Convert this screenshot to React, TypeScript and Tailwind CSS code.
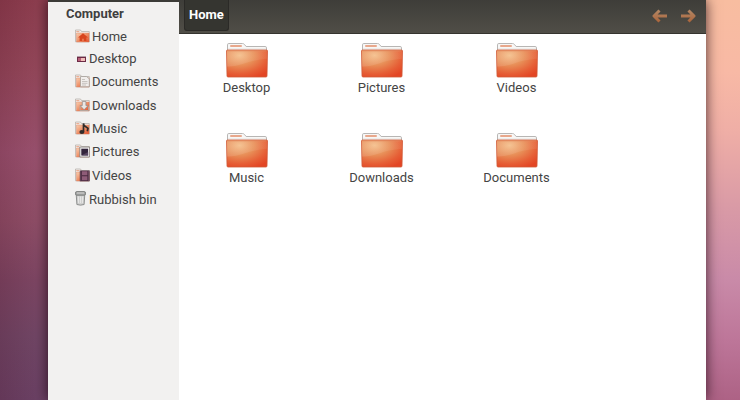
import type { ReactNode } from 'react';

interface Place {
	name: string;
	row: string;
	icon: ReactNode;
}

// Small folder with an emblem drawn over its front
function PlaceFolder({ children }: { children?: ReactNode }) {
	return (
		<svg viewBox="0 0 15 14" className="mb-[2px] h-[14px] w-[15px] shrink-0" aria-hidden="true">
			<path d="M.5 12.8V1h5l1 1.5h7.8v10.3z" fill="#f3efec" stroke="#b9b2ac" strokeWidth=".8" />
			<path d="M1.3 2.6h3" stroke="#e9a78b" />
			<path d="M1.5 4h12.6v9H1.5z" fill="url(#place-front)" stroke="#dc8160" strokeWidth=".4" />
			{children}
		</svg>
	);
}

const places: Place[] = [
	{
		name: 'Home',
		row: 'h-[23px] gap-[2px]',
		icon: (
			<PlaceFolder>
				<path d="M8 4.2 3 8.5h1.6V12h2.6V9.8h1.6V12h2.6V8.5H13z" fill="#d8451e" />
			</PlaceFolder>
		)
	},
	{
		name: 'Desktop',
		row: 'h-[22px] gap-[3px] pl-[2px]',
		icon: (
			<svg viewBox="0 0 9 6" className="h-[6px] w-[9px] shrink-0" aria-hidden="true">
				<path d="M0 0h9v6H0z" fill="#6c2b45" />
				<path d="M1 2h7v3H1z" fill="#f0bdb8" />
				<path d="M1 2h3v3H1z" fill="#b8607a" />
				<path d="M0 0h9v1H0z" fill="#b3a0a8" />
			</svg>
		)
	},
	{
		name: 'Documents',
		row: 'h-6 gap-[2px]',
		icon: (
			<PlaceFolder>
				<path d="M5.5 2.5h6l2.8 2.3v8H5.5z" fill="#f1eeec" stroke="#a5a09b" strokeWidth=".8" />
				<path d="M7 5.5h3M7 7.5h5.5M7 9.3h5.5M7 11h4" stroke="#b5b0ac" strokeWidth=".7" />
			</PlaceFolder>
		)
	},
	{
		name: 'Downloads',
		row: 'h-[23px] gap-[2px]',
		icon: (
			<PlaceFolder>
				<path d="M5 8.5v4h8.5v-4" fill="none" stroke="#b5a59c" />
				<path
					d="M7.3 3.5h3.6v4h2.2L9.1 11.8 5.1 7.5h2.2z"
					fill="#e9e7e5"
					stroke="#8f8986"
					strokeWidth=".7"
				/>
			</PlaceFolder>
		)
	},
	{
		name: 'Music',
		row: 'h-[23px] gap-[2px]',
		icon: (
			<PlaceFolder>
				<path d="M8.5 10.7V2.5l.5 2 4 2.8-.7 3" fill="none" stroke="#302d2c" strokeWidth="1.7" />
				<ellipse cx="6.9" cy="10.9" rx="2.5" ry="2" fill="#302d2c" />
			</PlaceFolder>
		)
	},
	{
		name: 'Pictures',
		row: 'h-6 gap-[2px]',
		icon: (
			<PlaceFolder>
				<path d="M4.8 3h9.8v10H4.8z" fill="#f0eeee" stroke="#807b7a" strokeWidth=".8" />
				<path d="M6.3 4.7h6.8v6.7H6.3z" fill="#32243c" />
				<path d="m6.3 11.4 6.8-3.5v3.5z" fill="#564461" />
			</PlaceFolder>
		)
	},
	{
		name: 'Videos',
		row: 'h-[23px] gap-[2px]',
		icon: (
			<PlaceFolder>
				<path d="M4.8 2.5h9.8v10.8H4.8z" fill="#49283e" />
				<path d="M7 3.3h5.4v4H7zM7 8.3h5.4v4H7z" fill="#8f5c78" />
				<path d="M5.8 3.5v9M13.6 3.5v9" stroke="#a78c9c" strokeWidth=".7" strokeDasharray="1 1" />
			</PlaceFolder>
		)
	},
	{
		name: 'Rubbish bin',
		row: 'h-[26px] gap-[3px]',
		icon: (
			<svg viewBox="0 0 11 15" className="mb-1 h-[15px] w-[11px] shrink-0" aria-hidden="true">
				<path d="M1.2 3h8.6l-.7 10.5q-3.6 1.3-7.2 0z" fill="#d0d0cf" stroke="#858786" strokeWidth=".9" />
				<path d="M3.5 5.5v6.5M5.5 5.5v6.5M7.5 5.5v6.5" stroke="#e6e6e5" />
				<rect x=".5" y=".6" width="10" height="3.6" rx="1.3" fill="#a6a7a6" stroke="#777978" strokeWidth=".9" />
				<path d="M2 2h7" stroke="#d8d8d7" strokeWidth=".9" />
			</svg>
		)
	}
];

const folders = ['Desktop', 'Pictures', 'Videos', 'Music', 'Downloads', 'Documents'];

// Gradients shared by the folder and arrow drawings
function Gradients() {
	return (
		<svg className="absolute size-0" aria-hidden="true">
			<defs>
				<linearGradient id="place-front" x1="0" y1="0" x2="1" y2="1">
					<stop offset="0" stopColor="#f8cfb0" />
					<stop offset=".5" stopColor="#ee8f66" />
					<stop offset="1" stopColor="#e2502c" />
				</linearGradient>
				<radialGradient id="folder-front" cx=".32" cy=".2" r=".9">
					<stop offset="0" stopColor="#f4bd88" />
					<stop offset=".4" stopColor="#e88f58" />
					<stop offset=".75" stopColor="#e65f36" />
					<stop offset="1" stopColor="#e34524" />
				</radialGradient>
				<linearGradient id="folder-gloss" x1="0" y1="0" x2="1" y2="0">
					<stop offset="0" stopColor="#fff" stopOpacity=".12" />
					<stop offset="1" stopColor="#fff" stopOpacity=".06" />
				</linearGradient>
				<linearGradient id="arrow-fill" x1="0" y1="0" x2="0" y2="14" gradientUnits="userSpaceOnUse">
					<stop offset="0" stopColor="#b48a68" />
					<stop offset="1" stopColor="#aa6238" />
				</linearGradient>
			</defs>
		</svg>
	);
}

function FolderIcon() {
	return (
		<svg viewBox="0 0 42 35" className="h-[35px] w-[42px]" aria-hidden="true">
			<path
				d="M1.5 9V1.8Q1.5.5 2.8.5h13.7q1.2 0 2 1l1.6 2h19q1.4 0 1.4 1.3V9z"
				fill="#f8f7f6"
				stroke="#b8b6b4"
			/>
			<rect x="4" y="2" width="12" height="2" rx="1" fill="#e9a88c" />
			<path d="M2 6h38" stroke="#e5e2df" />
			<path
				d="M.5 8Q.5 7 1.5 7h39q1 0 1 1l-.5 25q0 1-1 1H2q-1 0-1-1z"
				fill="url(#folder-front)"
				stroke="#cf5b38"
				strokeWidth=".8"
			/>
			<path d="M1 7.8h40v8Q27 17 18 20.5 8 24 1 23.5z" fill="url(#folder-gloss)" />
			<path d="M1.5 7.8h39" stroke="#e58a62" strokeWidth=".8" />
		</svg>
	);
}

function Arrow({ direction }: { direction: 'back' | 'forward' }) {
	return (
		<svg viewBox="0 0 16 14" className="h-[14px] w-4" aria-hidden="true">
			<path
				d={direction === 'back' ? 'M7.5 1.5 2 7l5.5 5.5M2 7h13' : 'M8.5 1.5 14 7l-5.5 5.5M14 7H1'}
				fill="none"
				stroke="url(#arrow-fill)"
				strokeWidth="3"
				strokeLinejoin="round"
			/>
		</svg>
	);
}

export default function App() {
	return (
		<div className="flex min-h-screen overflow-hidden font-[Roboto,'Noto_Sans',sans-serif] text-[13px] leading-4 text-[#444444]">
			<Gradients />
			<div className="w-12 shrink-0 bg-[linear-gradient(90deg,rgba(60,0,20,0.14),transparent_75%),linear-gradient(180deg,#8c3d4e_0%,#93475a_18%,#98506d_38%,#8e4d66_55%,#7c4562_70%,#704564_84%,#6a4063_100%)]" />

			<div className="relative flex min-w-0 flex-1 flex-col bg-[#3c3b37] shadow-[0_0_12px_rgba(20,0,10,0.75)]">
				<div className="flex flex-1">
					<nav className="mt-[2px] w-[131px] shrink-0 bg-[#f2f1f0]" aria-label="Places">
						<h2 className="pt-1 pl-[18px] font-bold text-[#3f3f3f]">Computer</h2>
						<ul className="mt-[3px] pl-[27px]">
							{places.map((place) => (
								<li key={place.name}>
									<button type="button" className={`flex items-center whitespace-nowrap ${place.row}`}>
										{place.icon}
										{place.name}
									</button>
								</li>
							))}
						</ul>
					</nav>

					<div className="flex min-w-0 flex-1 flex-col">
						<header className="flex h-[34px] items-start justify-between border-b border-[#35342f] bg-linear-to-b from-[#3e3d39] to-[#504e47] pr-[10px] pl-[5px]">
							<button
								type="button"
								className="h-[31px] rounded-b-[3px] border border-t-0 border-[#2b2a27] bg-[#353530] px-1 font-bold text-white"
							>
								Home
							</button>
							<div className="flex gap-3 pt-[9px]">
								<button type="button" aria-label="Back">
									<Arrow direction="back" />
								</button>
								<button type="button" aria-label="Forward">
									<Arrow direction="forward" />
								</button>
							</div>
						</header>
						<main className="grid flex-1 auto-rows-[90px] grid-cols-[repeat(auto-fill,135px)] bg-white pt-[9px]">
							{folders.map((name) => (
								<button key={name} type="button" className="flex flex-col items-center gap-[2px]">
									<FolderIcon />
									{name}
								</button>
							))}
						</main>
					</div>
				</div>
			</div>

			<div className="w-[34px] shrink-0 bg-[linear-gradient(180deg,#f8bda0_0%,#f8b9a5_18%,#efaea6_33%,#d99aa6_52%,#c98aa8_70%,#bd7699_85%,#ad6285_100%)]" />
		</div>
	);
}
